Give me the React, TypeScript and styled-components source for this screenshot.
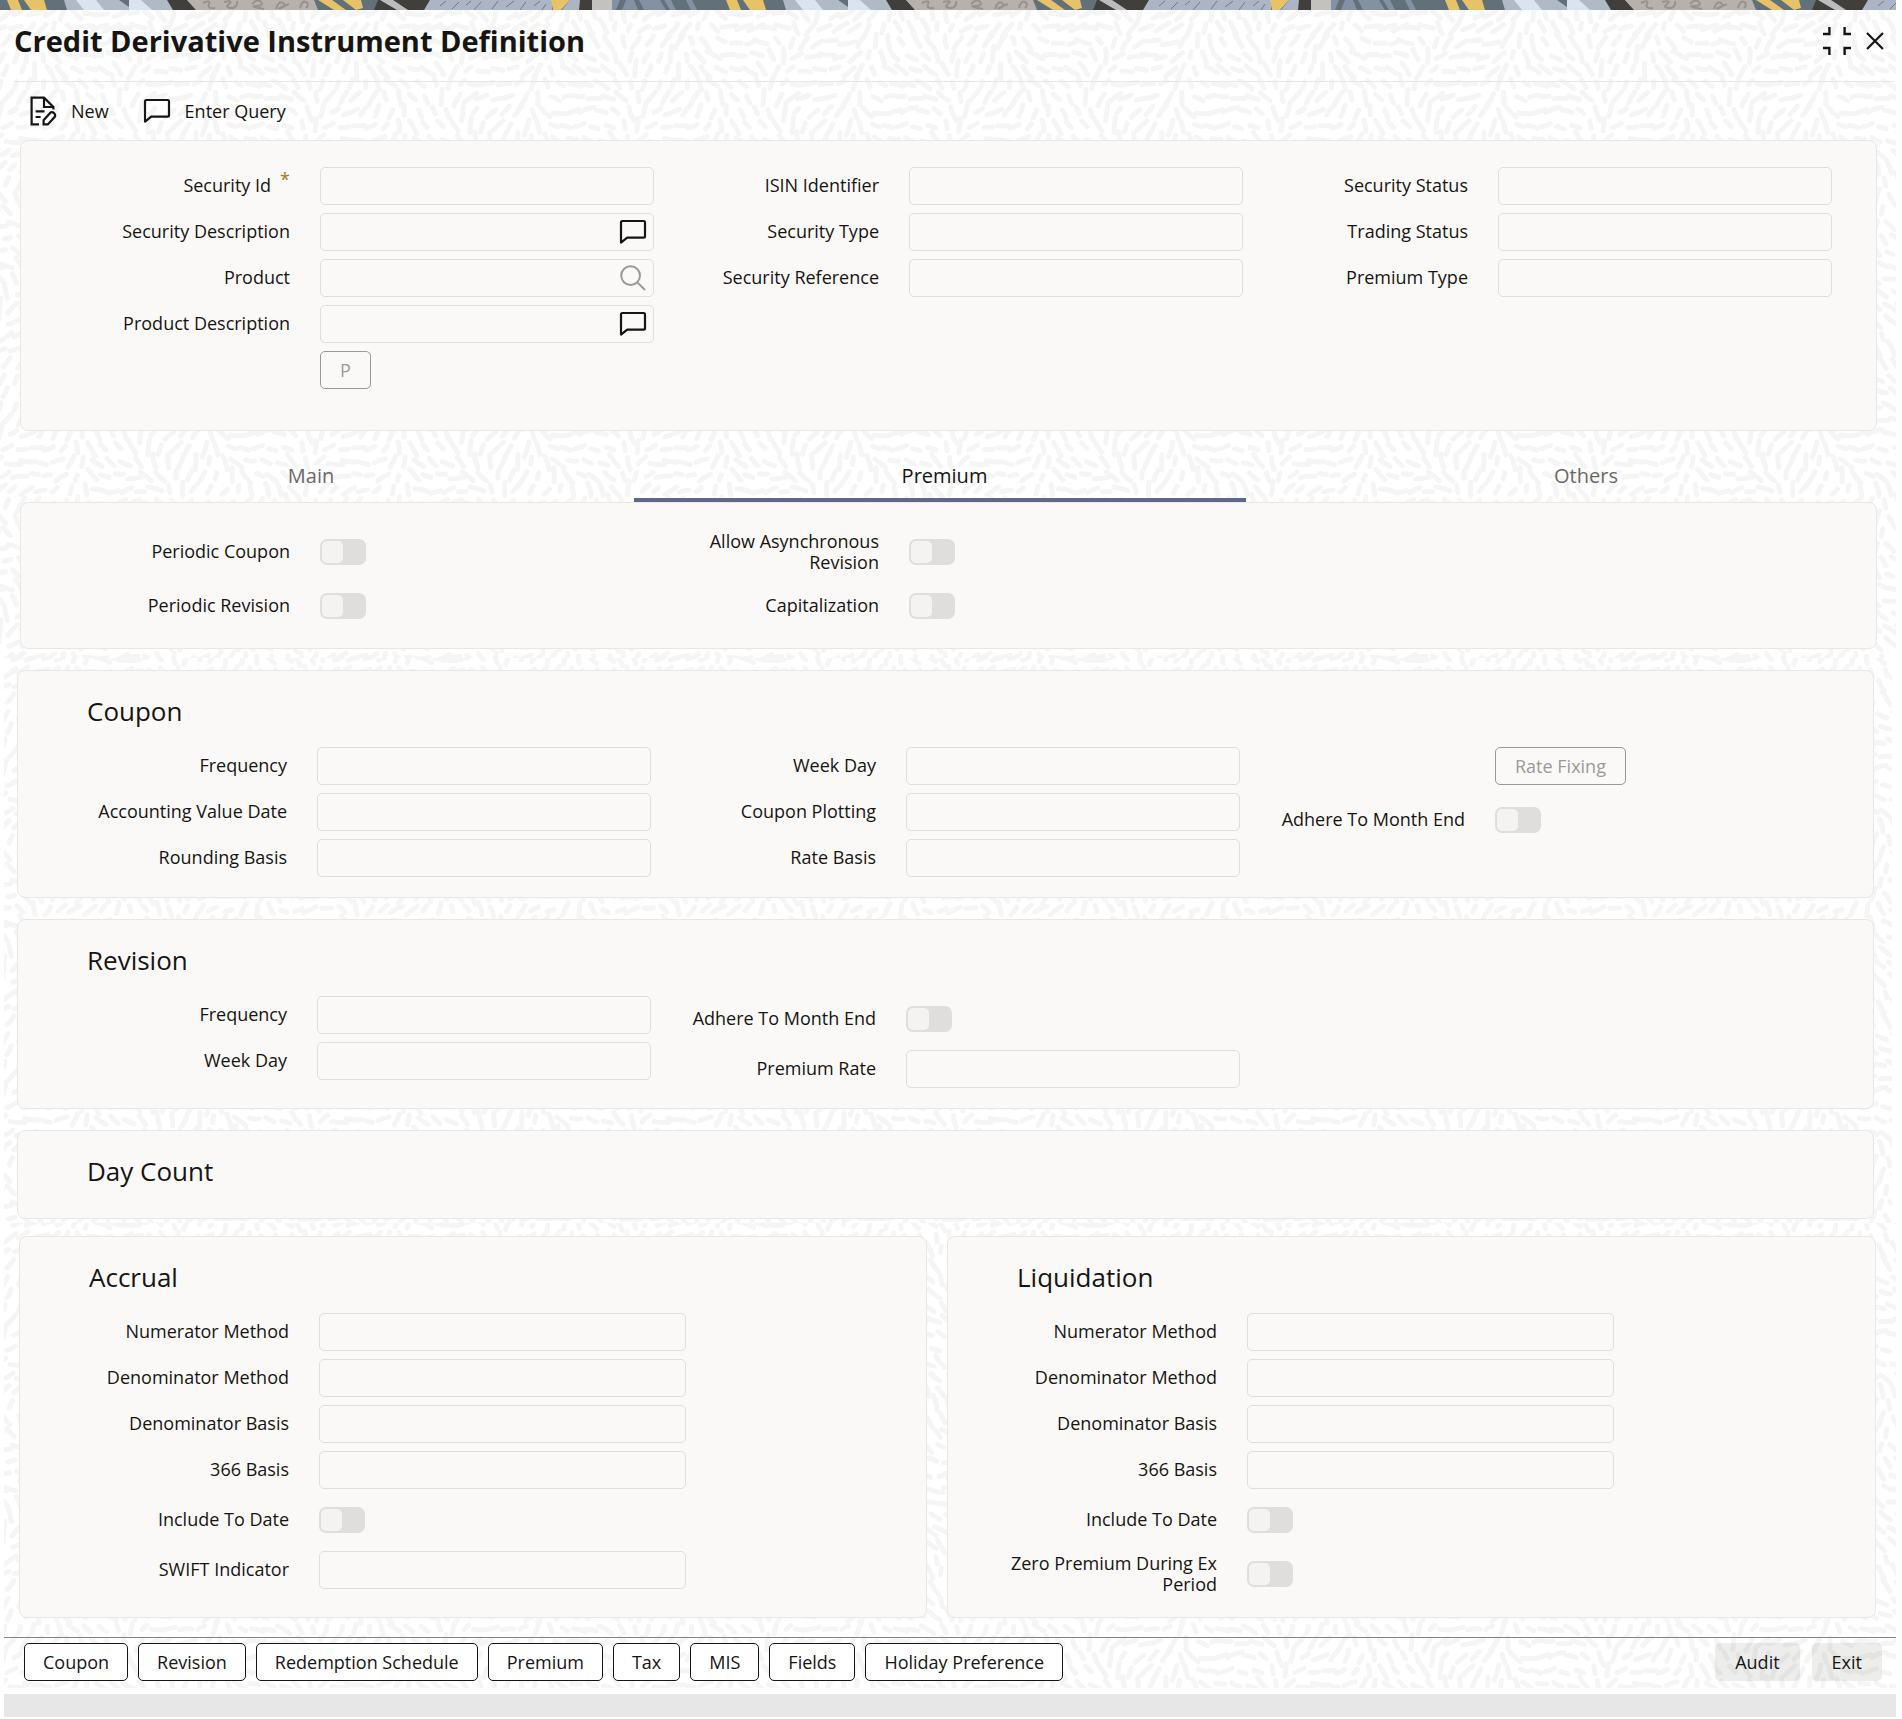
import React, { useId, useState } from "react";
import styled, { createGlobalStyle, css } from "styled-components";

const ink = "#161513";
const muted = "#9b9998";
const panelFill = "#fbf9f7";
const panelLine = "#e8e7e6";
const fontStack = `"Open Sans", "Noto Sans", "Liberation Sans", sans-serif`;

/* ---------- Decorative artwork ---------- */

// A seamless tile of short rounded dashes that follow a slowly turning field.
function buildDashTile(size: number, step: number) {
  const count = Math.round(size / step);
  const cell = size / count;
  const turn = (2 * Math.PI) / size;
  let seed = 11;
  const rand = () => {
    seed = (seed * 16807) % 2147483647;
    return seed / 2147483647;
  };
  let d = "";
  for (let r = 0; r < count; r++) {
    for (let c = 0; c < count; c++) {
      const x = (c + (r % 2) * 0.5 + (rand() - 0.5) * 0.3) * cell;
      const y = (r + (rand() - 0.5) * 0.3) * cell;
      const angle =
        1.5 +
        1.1 * Math.sin(turn * 2 * x + Math.sin(turn * y)) +
        0.7 * Math.cos(turn * 2 * y + turn * x) +
        (rand() - 0.5) * 0.6;
      const half = 3 + rand() * 5;
      const dx = Math.cos(angle) * half;
      const dy = Math.sin(angle) * half;
      const bend = (rand() - 0.5) * 0.5;
      for (const ox of [-size, 0, size]) {
        for (const oy of [-size, 0, size]) {
          const cx = x + ox;
          const cy = y + oy;
          if (cx < -14 || cy < -14 || cx > size + 14 || cy > size + 14) continue;
          const points = [cx - dx, cy - dy, cx - dy * bend, cy + dx * bend, cx + dx, cy + dy].map((n) => n.toFixed(1));
          d += `M${points[0]} ${points[1]}Q${points.slice(2).join(" ")}`;
        }
      }
    }
  }
  const svg = `<svg xmlns="http://www.w3.org/2000/svg" width="${size}" height="${size}"><path d="${d}" fill="none" stroke="#f5f5f5" stroke-width="5" stroke-linecap="round"/></svg>`;
  return `url("data:image/svg+xml,${encodeURIComponent(svg)}")`;
}

const dashTile = buildDashTile(322, 14);

const BannerSvg = styled.svg`
  display: block;
  width: 100%;
  height: 10px;
`;

function Banner() {
  return (
    <BannerSvg aria-hidden="true">
      <defs>
        <pattern id="banner-art" width="719" height="10" patternUnits="userSpaceOnUse">
          <rect width="719" height="10" fill="#62707a" />
          <path d="M7 0H18L22 10H11ZM24 0H44L47 10H31Z" fill="#e8c268" />
          <path d="M64 0H168L182 10H67Z" fill="#b0bac6" />
          <path d="M76 0H96L104 10H84ZM129 0H141L152 10H129Z" fill="#dae3f0" />
          <path d="M119 0H129V7Z" fill="#62707a" />
          <path d="M167 0H187L196 10H173Z" fill="#403f3b" />
          <path d="M187 0H314L318 10H196Z" fill="#b6b1ad" />
          <path
            d="M203 3q8-4 6 1t6 4M224 2q10-2 5 2t4 4q5-2 4-7M252 4q6-6 9-2t-5 4 8 3M276 9q3-9 7-6t-2 5 8-4M300 8q2-8 6-6t0 6"
            fill="none"
            stroke="#96928e"
            strokeWidth="2"
          />
          <path d="M318 0H332L346 10H334ZM343 0H361L363 8L356 10Z" fill="#e8c268" />
          <path d="M378 0H430L426 10H374Z" fill="#403f3b" />
          <path d="M380 0H393L408 10H397Z" fill="#bcbcbe" />
          <path d="M430 0H552V10H424Z" fill="#abb5c5" />
          <path
            d="M440 6l6-5M452 9l7-7M466 5l5-4M474 10l7-8M492 9l6-8M506 7l8-6M520 10l6-8M534 6l6-5M542 10l4-6"
            fill="none"
            stroke="#6f7884"
            strokeWidth="1"
          />
          <path d="M551 0H570L561 10H553Z" fill="#e8c268" />
          <path d="M570 0H580V10H562Z" fill="#abb5c5" />
          <path d="M580 0H592V10H579Z" fill="#403f3b" />
          <path d="M592 0H612V10H592Z" fill="#c3c2bf" />
          <path d="M612 0H660L666 10H612Z" fill="#8490a3" />
          <path d="M620 0h6l-4 10h-6zM634 0h5l5 10h-6zM676 0h7l6 10h-6zM698 0h5l5 10h-6z" fill="#62707a" />
          <path d="M664 0h7l5 10h-6zM686 0h6l5 10h-6z" fill="#8490a3" />
        </pattern>
      </defs>
      <rect width="100%" height="10" fill="url(#banner-art)" />
    </BannerSvg>
  );
}

const Glyph = styled.svg`
  display: block;
  flex: none;
  fill: none;
  stroke: currentColor;
`;

const NewIcon = () => (
  <Glyph width="28" height="30" viewBox="0 0 28 30" strokeWidth="2.2" aria-hidden="true">
    <path d="M10 28.4H2.6V1.6H15L24.4 11V13.6" />
    <path d="M15 1.6V11H24.4" />
    <path d="M6.6 15.4H15.6M6.6 21H11.6" />
    <path d="M14.6 28.4V24.2L21.6 16.4Q23.4 15.6 25.2 17.2Q26.8 19 25.8 20.8L18.8 28.4Z" />
  </Glyph>
);

const NoteIcon = () => (
  <Glyph width="28" height="26" viewBox="0 0 28 26" strokeWidth="2.2" strokeLinejoin="round" aria-hidden="true">
    <path d="M2 23.6V3.4Q2 2 3.4 2H24.6Q26 2 26 3.4V17.2Q26 18.6 24.6 18.6H8.2Z" />
  </Glyph>
);

const SearchIcon = () => (
  <Glyph width="28" height="26" viewBox="0 0 28 26" strokeWidth="2" aria-hidden="true">
    <circle cx="11.6" cy="10.6" r="9.4" />
    <path d="M18.4 17.4L26 25" />
  </Glyph>
);

const CollapseIcon = () => (
  <Glyph width="30" height="30" viewBox="0 0 30 30" strokeWidth="2.4" aria-hidden="true">
    <path d="M1 8H7.4V1M22.6 1V8H29M1 22H7.4V29M22.6 29V22H29" />
  </Glyph>
);

const CloseIcon = () => (
  <Glyph width="18" height="18" viewBox="0 0 18 18" strokeWidth="2.2" aria-hidden="true">
    <path d="M1 1L17 17M17 1L1 17" />
  </Glyph>
);

/* ---------- Page frame ---------- */

const GlobalStyle = createGlobalStyle`
  *, *::before, *::after { box-sizing: border-box; }
  body {
    margin: 0;
    background: #fff;
    color: ${ink};
    font: 18px/21px ${fontStack};
  }
  button, input { font: inherit; color: inherit; }
`;

const Page = styled.div`
  padding: 0 6px 2px 0;
`;

const TopArea = styled.div`
  padding-bottom: 9px;
  background: #fff ${dashTile};
`;

const MiddleArea = styled.div`
  display: flex;
  flex-direction: column;
  gap: 21px;
  margin: 0 4px;
  padding: 12px 18px 4px 13px;
  background: #fff ${dashTile};
`;

const BottomArea = styled.div`
  margin-left: 4px;
  padding-top: 13px;
  background: #fff ${dashTile};
`;

const Header = styled.header`
  display: flex;
  align-items: center;
  justify-content: space-between;
  height: 72px;
  margin: 0 2px 0 14px;
  padding: 0 10px 9px 0;
  border-bottom: 1px solid #e6e5e4;
`;

const Title = styled.h1`
  margin: 0;
  font-size: 29px;
  line-height: 36px;
  font-weight: 700;
`;

const WindowActions = styled.div`
  display: flex;
  align-items: center;
  gap: 14px;
`;

const PlainButton = styled.button`
  display: flex;
  align-items: center;
  gap: 14px;
  padding: 0;
  border: 0;
  background: none;
  cursor: pointer;

  &:disabled {
    color: ${muted};
    cursor: default;
  }
`;

const Toolbar = styled.div`
  display: flex;
  gap: 34px;
  height: 58px;
  padding-left: 29px;
`;

/* ---------- Panels and fields ---------- */

const Panel = styled.section<{ $bottom?: number }>`
  border: 1px solid ${panelLine};
  border-radius: 8px;
  background: ${panelFill};
  padding-bottom: ${(p) => p.$bottom ?? 20}px;
`;

const TopPanel = styled(Panel)`
  margin: 0 19px 0 20px;
  padding-top: 26px;
`;

const PanelTitle = styled.h2`
  height: 76px;
  margin: 0;
  padding: 23px 0 0 69px;
  font-size: 26px;
  line-height: 34px;
  font-weight: 400;
`;

const Columns = styled.div`
  display: grid;
  grid-template-columns: repeat(3, minmax(0, 1fr));
  align-items: start;
  gap: 16px;
  padding: 0 44px 0 60px;
`;

const Column = styled.div`
  display: flex;
  flex-direction: column;
  gap: 8px;
`;

const NarrowColumn = styled(Column)`
  max-width: 666px;
  padding-left: 60px;
`;

const Row = styled.div<{ $height?: number }>`
  display: grid;
  grid-template-columns: 209px minmax(0, 1fr);
  column-gap: 30px;
  align-items: center;
  min-height: ${(p) => p.$height ?? 38}px;
`;

const Label = styled.label`
  padding-bottom: 1px;
  text-align: right;
`;

const Required = styled.span`
  margin-left: 9px;
  color: #b3701a;
  line-height: 0;
  vertical-align: 6px;
`;

const InputBox = styled.div`
  display: flex;
  align-items: center;
  height: 38px;
  padding-right: 6px;
  border: 1px solid #dfdedd;
  border-radius: 5px;
`;

const TextInput = styled.input`
  flex: 1;
  min-width: 0;
  height: 100%;
  padding: 0 12px;
  border: 0;
  outline: 0;
  background: transparent;
`;

const Toggle = styled.input`
  appearance: none;
  display: flex;
  width: 46px;
  height: 26px;
  margin: 0;
  padding: 2px;
  border-radius: 7px;
  background: #dfdedd;

  &::before {
    content: "";
    width: 21px;
    border-radius: 5px;
    background: #f5f3f2;
  }
`;

const outlined = css`
  padding: 0 18px;
  border: 1px solid currentColor;
  background: #fff;
`;

const Button = styled.button<{ $solid?: boolean }>`
  height: 38px;
  padding: 0 19px;
  border: 1px solid transparent;
  border-radius: 5px;
  background: rgba(22, 21, 19, 0.08);
  cursor: pointer;
  ${(p) => !p.$solid && outlined}

  &:disabled {
    padding: 0 19px;
    color: ${muted};
    background: transparent;
    cursor: default;
  }
`;

const ButtonRow = styled(Row)`
  align-items: start;

  & > button {
    grid-column: 2;
    justify-self: start;
  }
`;

const TwoPanels = styled.div`
  display: grid;
  grid-template-columns: 908fr 929fr;
  gap: 20px;
  padding: 0 20px 0 15px;
`;

type FieldProps = {
  label: string;
  required?: boolean;
  action?: "note" | "search";
};

function Field({ label, required, action }: FieldProps) {
  const id = useId();
  return (
    <Row>
      <Label htmlFor={id}>
        {label}
        {required && <Required>*</Required>}
      </Label>
      <InputBox>
        <TextInput id={id} type="text" readOnly />
        {action === "note" && (
          <PlainButton type="button" aria-label={`Open ${label}`}>
            <NoteIcon />
          </PlainButton>
        )}
        {action === "search" && (
          <PlainButton type="button" disabled aria-label={`Search ${label}`}>
            <SearchIcon />
          </PlainButton>
        )}
      </InputBox>
    </Row>
  );
}

function Switch({ label }: { label: string }) {
  const id = useId();
  return (
    <Row $height={46}>
      <Label htmlFor={id}>{label}</Label>
      <Toggle id={id} type="checkbox" role="switch" disabled />
    </Row>
  );
}

/* ---------- Tabs ---------- */

const TabBar = styled.div`
  display: grid;
  grid-template-columns: 634fr 612fr 650fr;
  height: 71px;
`;

const Tab = styled.button<{ $active: boolean; $start: number; $end: number }>`
  padding: 22px ${(p) => p.$end}px 0 ${(p) => p.$start}px;
  border: 0;
  border-bottom: 4px solid ${(p) => (p.$active ? "#5f678a" : "transparent")};
  background: none;
  color: ${(p) => (p.$active ? ink : "#6b6967")};
  font-size: 20px;
  line-height: 26px;
  cursor: pointer;
`;

const tabs = [
  { name: "Main", start: 0, end: 12 },
  { name: "Premium", start: 9, end: 0 },
  { name: "Others", start: 30, end: 0 },
];

/* ---------- Footer ---------- */

const Footer = styled.footer`
  display: flex;
  justify-content: space-between;
  margin-top: 19px;
  padding: 5px 14px 7px 20px;
  border-top: 1px solid #858382;
`;

const ButtonGroup = styled.div<{ $gap: number }>`
  display: flex;
  gap: ${(p) => p.$gap}px;
`;

const StatusBar = styled.div`
  height: 23px;
  margin: 6px 0 0 4px;
  background: #e7e7e7;
`;

const subScreens = [
  "Coupon",
  "Revision",
  "Redemption Schedule",
  "Premium",
  "Tax",
  "MIS",
  "Fields",
  "Holiday Preference",
];

export default function App() {
  const [active, setActive] = useState("Premium");

  return (
    <>
      <GlobalStyle />
      <Page>
        <TopArea>
          <Banner />
          <Header>
            <Title>Credit Derivative Instrument Definition</Title>
            <WindowActions>
              <PlainButton type="button" aria-label="Collapse">
                <CollapseIcon />
              </PlainButton>
              <PlainButton type="button" aria-label="Close">
                <CloseIcon />
              </PlainButton>
            </WindowActions>
          </Header>
          <Toolbar>
            <PlainButton type="button">
              <NewIcon />
              New
            </PlainButton>
            <PlainButton type="button">
              <NoteIcon />
              Enter Query
            </PlainButton>
          </Toolbar>

          <TopPanel $bottom={37}>
            <Columns>
              <Column>
                <Field label="Security Id" required />
                <Field label="Security Description" action="note" />
                <Field label="Product" action="search" />
                <Field label="Product Description" action="note" />
                <ButtonRow $height={42}>
                  <Button type="button" disabled>
                    P
                  </Button>
                </ButtonRow>
              </Column>
              <Column>
                <Field label="ISIN Identifier" />
                <Field label="Security Type" />
                <Field label="Security Reference" />
              </Column>
              <Column>
                <Field label="Security Status" />
                <Field label="Trading Status" />
                <Field label="Premium Type" />
              </Column>
            </Columns>
          </TopPanel>

          <TabBar role="tablist">
            {tabs.map((t) => (
              <Tab
                key={t.name}
                type="button"
                role="tab"
                aria-selected={active === t.name}
                $active={active === t.name}
                $start={t.start}
                $end={t.end}
                onClick={() => setActive(t.name)}
              >
                {t.name}
              </Tab>
            ))}
          </TabBar>

          <TopPanel $bottom={19}>
            <Columns>
              <Column>
                <Switch label="Periodic Coupon" />
                <Switch label="Periodic Revision" />
              </Column>
              <Column>
                <Switch label="Allow Asynchronous Revision" />
                <Switch label="Capitalization" />
              </Column>
            </Columns>
          </TopPanel>
        </TopArea>

        <MiddleArea>
          <Panel>
            <PanelTitle>Coupon</PanelTitle>
            <Columns>
              <Column>
                <Field label="Frequency" />
                <Field label="Accounting Value Date" />
                <Field label="Rounding Basis" />
              </Column>
              <Column>
                <Field label="Week Day" />
                <Field label="Coupon Plotting" />
                <Field label="Rate Basis" />
              </Column>
              <Column>
                <ButtonRow $height={42}>
                  <Button type="button" disabled>
                    Rate Fixing
                  </Button>
                </ButtonRow>
                <Switch label="Adhere To Month End" />
              </Column>
            </Columns>
          </Panel>

          <Panel>
            <PanelTitle>Revision</PanelTitle>
            <Columns>
              <Column>
                <Field label="Frequency" />
                <Field label="Week Day" />
              </Column>
              <Column>
                <Switch label="Adhere To Month End" />
                <Field label="Premium Rate" />
              </Column>
            </Columns>
          </Panel>

          <Panel $bottom={11}>
            <PanelTitle>Day Count</PanelTitle>
          </Panel>
        </MiddleArea>

        <BottomArea>
          <TwoPanels>
            <Panel>
              <PanelTitle>Accrual</PanelTitle>
              <NarrowColumn>
                <Field label="Numerator Method" />
                <Field label="Denominator Method" />
                <Field label="Denominator Basis" />
                <Field label="366 Basis" />
                <Switch label="Include To Date" />
                <Field label="SWIFT Indicator" />
              </NarrowColumn>
            </Panel>
            <Panel>
              <PanelTitle>Liquidation</PanelTitle>
              <NarrowColumn>
                <Field label="Numerator Method" />
                <Field label="Denominator Method" />
                <Field label="Denominator Basis" />
                <Field label="366 Basis" />
                <Switch label="Include To Date" />
                <Switch label="Zero Premium During Ex Period" />
              </NarrowColumn>
            </Panel>
          </TwoPanels>

          <Footer>
            <ButtonGroup $gap={10}>
              {subScreens.map((name) => (
                <Button key={name} type="button">
                  {name}
                </Button>
              ))}
            </ButtonGroup>
            <ButtonGroup $gap={12}>
              <Button type="button" $solid>
                Audit
              </Button>
              <Button type="button" $solid>
                Exit
              </Button>
            </ButtonGroup>
          </Footer>
        </BottomArea>
        <StatusBar />
      </Page>
    </>
  );
}
